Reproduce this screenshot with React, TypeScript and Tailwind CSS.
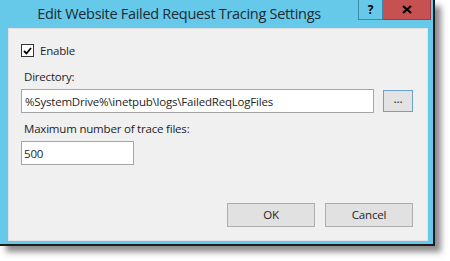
import { useState } from 'react'

export default function App() {
  const [enabled, setEnabled] = useState(true)
  const [dir, setDir] = useState('%SystemDrive%\\inetpub\\logs\\FailedReqLogFiles')
  const [maxFiles, setMaxFiles] = useState('500')

  return (
    <div className="w-[450px] h-[261px] bg-white font-['Open_Sans','Noto_Sans',sans-serif] text-[11.5px] tracking-[-0.2px] text-[#1e1e1e]">
      <div className="w-[435px] h-[246px] bg-[#66c9ea] border-r-2 border-b-2 border-[#1c1c1c] shadow-[6px_6px_6px_rgba(0,0,0,0.45)] flex flex-col pl-[8px] pr-[5px] pb-[3px]">
        {/* title bar */}
        <div className="h-[28px] flex items-start -ml-[8px] -mr-[5px]">
          <div className="flex-1 h-[27px] flex items-center justify-center text-[14.5px] tracking-[-0.3px] text-[#1d2c33]">
            Edit Website Failed Request Tracing Settings
          </div>
          <button className="w-[25px] h-[20px] bg-[#66c9ea] border border-[#3d8aa8] border-t-0 flex items-center justify-center font-bold text-[12px] text-black">
            ?
          </button>
          <button className="w-[48px] h-[20px] bg-[#c75050] border border-[#9e3a3a] border-t-0 border-l-0 flex items-center justify-center text-black">
            <svg width="10" height="9" viewBox="0 0 10 9">
              <path d="M1 1 L9 8 M9 1 L1 8" stroke="#000" strokeWidth="2.2" />
            </svg>
          </button>
          <div className="w-[2px]" />
        </div>

        {/* content panel */}
        <div className="flex-1 bg-[#f0f0f0] border border-[#e3e3e3] px-[12px] flex flex-col">
          <label className="mt-[15px] h-[13px] flex items-center gap-[6px] cursor-pointer">
            <span
              onClick={() => setEnabled(!enabled)}
              className="w-[13px] h-[13px] border border-[#333] bg-white flex items-center justify-center"
            >
              {enabled && (
                <svg width="9" height="8" viewBox="0 0 9 8">
                  <path d="M1 4 L3.5 6.5 L8 1" fill="none" stroke="#000" strokeWidth="1.8" />
                </svg>
              )}
            </span>
            <span className="leading-none">Enable</span>
          </label>

          <div className="mt-[12px] pl-[3px] h-[16px] leading-[16px]">Directory:</div>
          <div className="mt-[4px] flex items-center gap-[9px]">
            <input
              value={dir}
              onChange={(e) => setDir(e.target.value)}
              className="w-[353px] h-[24px] border border-[#a5a5a5] bg-white px-[3px] text-[11.5px] tracking-[-0.2px] outline-none"
            />
            <button className="w-[30px] h-[22px] border border-[#6f9fcf] bg-[#e3e3e3] text-[12px] leading-none pb-[4px]">
              ...
            </button>
          </div>

          <div className="mt-[8px] pl-[3px] h-[16px] leading-[16px]">Maximum number of trace files:</div>
          <input
            value={maxFiles}
            onChange={(e) => setMaxFiles(e.target.value)}
            className="mt-[4px] w-[113px] h-[24px] border border-[#a5a5a5] bg-white px-[2px] text-[11.5px] outline-none"
          />

          <div className="mt-auto mb-[13px] flex justify-end gap-[10px] pr-[2px]">
            <button className="w-[88px] h-[24px] border border-[#acacac] bg-[#e1e1e1]">OK</button>
            <button className="w-[88px] h-[24px] border border-[#acacac] bg-[#e1e1e1]">Cancel</button>
          </div>
        </div>
      </div>
    </div>
  )
}
